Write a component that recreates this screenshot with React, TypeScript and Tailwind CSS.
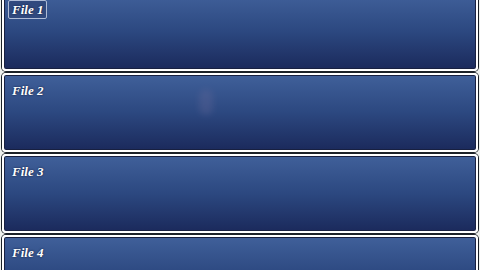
import React from "react";

const panels = ["File 1", "File 2", "File 3", "File 4"];

export default function App() {
  return (
    <div className="w-[480px] h-[270px] overflow-hidden bg-[#eef0ed]">
      <div className="flex flex-col gap-[2px] px-[2px] -mt-[8px]">
        {panels.map((label, i) => (
          <div
            key={label}
            className="relative h-[79px] shrink-0 rounded-[4px] border-2 border-white ring-1 ring-[#1c2228] bg-gradient-to-b from-[#40609a] via-[#2c4880] to-[#1b2a5c] shadow-[inset_0_0_0_1px_#182040]"
          >
            <div className="flex pt-[6px] pl-[4px]">
              <span
                className={
                  "px-[3px] leading-[17px] text-[13px] font-bold italic text-white [text-shadow:0_0_2px_#0b1430] " +
                  (i === 0
                    ? "border border-[#aebbd6] rounded-[2px] bg-[#30497e]"
                    : "border border-transparent")
                }
                style={{ fontFamily: '"Liberation Serif", "DejaVu Serif", serif' }}
              >
                {label}
              </span>
            </div>
            {i === 1 && (
              <div className="absolute left-[195px] top-[14px] w-[14px] h-[26px] rounded-full bg-[#6a6a9a] opacity-30 blur-[3px]" />
            )}
          </div>
        ))}
      </div>
    </div>
  );
}
